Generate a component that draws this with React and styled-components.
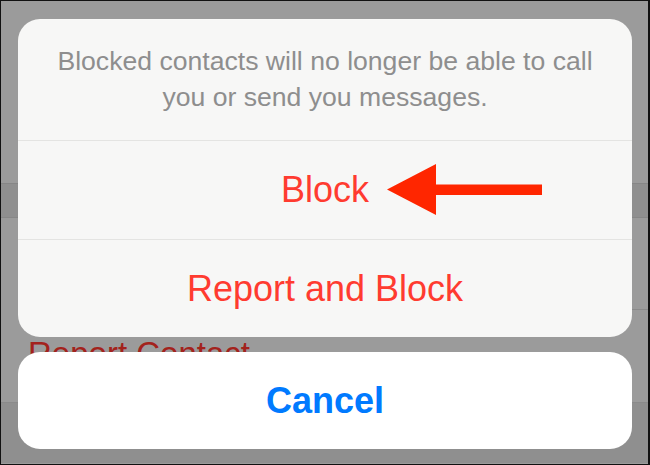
import React from "react";
import styled, { createGlobalStyle } from "styled-components";

const GlobalStyle = createGlobalStyle`
  body {
    margin: 0;
    background: #9b9b9b;
    font-family: "Liberation Sans", Arial, sans-serif;
  }
`;

export default function App() {
  return (
    <>
      <GlobalStyle />
      <Screen>
        <Backdrop>
          <Area height={182} />
          <Band />
          <Area height={92} />
          <Area height={92} inset>
            <BehindText>Report Contact</BehindText>
          </Area>
          <Area height={60} dark line />
        </Backdrop>
        <Overlay>
          <Sheet>
            <Message>
              Blocked contacts will no longer be able to call you or send you
              messages.
            </Message>
            <Action height={98}>
              Block
              <Arrow width="155" height="51" viewBox="0 0 155 51">
                <polygon
                  points="0,25.5 49,0 49,20.5 155,20.5 155,31 49,31 49,51"
                  fill="#ff2600"
                />
              </Arrow>
            </Action>
            <Action height={97}>Report and Block</Action>
          </Sheet>
          <CancelButton>Cancel</CancelButton>
        </Overlay>
      </Screen>
    </>
  );
}

const Screen = styled.div`
  position: relative;
  box-sizing: border-box;
  width: 650px;
  height: 465px;
  overflow: hidden;
  border: 1px solid #111;
  border-right-width: 2px;
  background: #9b9b9b;
`;

const Backdrop = styled.div`
  display: flex;
  flex-direction: column;
`;

const Area = styled.div`
  position: relative;
  height: ${(props) => props.height}px;
  flex-shrink: 0;
  background: ${(props) => (props.dark ? "#8f8f8f" : "#9b9b9b")};
  border-top: ${(props) => (props.line ? "1px solid #8a8a8a" : "none")};

  &::before {
    content: "";
    display: ${(props) => (props.inset ? "block" : "none")};
    position: absolute;
    top: -1px;
    left: 60px;
    right: 0;
    height: 1px;
    background: #8a8a8a;
  }
`;

const Band = styled.div`
  height: 33px;
  background: #8f8f8f;
  border-top: 1px solid #868686;
  border-bottom: 1px solid #878787;
`;

const BehindText = styled.div`
  padding: 26px 0 0 27px;
  font-size: 33px;
  line-height: 36px;
  color: #a3221c;
`;

const Overlay = styled.div`
  position: absolute;
  inset: 0;
  display: flex;
  flex-direction: column;
  gap: 15px;
  padding: 18px 16px 0 17px;
`;

const Sheet = styled.div`
  display: flex;
  flex-direction: column;
  border-radius: 22px;
  background: #f7f7f6;
  overflow: hidden;
`;

const Message = styled.div`
  height: 121px;
  box-sizing: border-box;
  padding: 24px 30px 0;
  font-size: 26.6px;
  line-height: 36px;
  color: #8e8e8e;
  text-align: center;
`;

const Action = styled.div`
  position: relative;
  height: ${(props) => props.height}px;
  border-top: 1px solid #e4e4e2;
  display: flex;
  align-items: center;
  justify-content: center;
  font-size: 36px;
  color: #ff3b30;
`;

const Arrow = styled.svg`
  position: absolute;
  left: 369px;
  top: 23px;
`;

const CancelButton = styled.div`
  height: 97px;
  border-radius: 22px;
  background: #ffffff;
  display: flex;
  align-items: center;
  justify-content: center;
  font-size: 36px;
  font-weight: bold;
  color: #007aff;
`;
